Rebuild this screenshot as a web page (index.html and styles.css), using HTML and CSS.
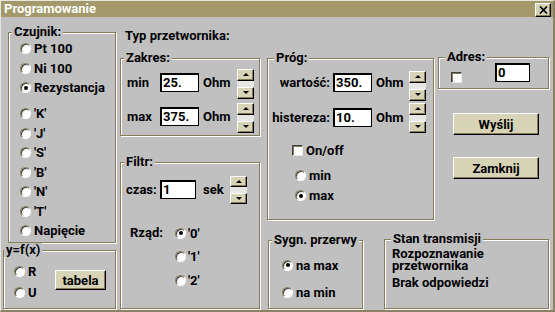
FILE: index.html
```html
<!DOCTYPE html>
<html>
<head>
<meta charset="utf-8">
<link rel="stylesheet" href="styles.css">
</head>
<body>
<div class="window">
	<div class="titlebar">
		<span class="title">Programowanie</span>
		<span class="close"><svg width="9" height="8" viewBox="0 0 9 8"><path d="M1 0.5L8 7.5M8 0.5L1 7.5" stroke="#000" stroke-width="1.7"/></svg></span>
	</div>
	<div class="client">
		<div class="col-left">
			<div class="group czujnik">
				<span class="caption">Czujnik:</span>
				<div class="opts">
					<div class="opt"><span class="radio"></span>Pt 100</div>
					<div class="opt"><span class="radio"></span>Ni 100</div>
					<div class="opt"><span class="radio on"></span>Rezystancja</div>
				</div>
				<div class="opts tc">
					<div class="opt"><span class="radio"></span>'K'</div>
					<div class="opt"><span class="radio"></span>'J'</div>
					<div class="opt"><span class="radio"></span>'S'</div>
					<div class="opt"><span class="radio"></span>'B'</div>
					<div class="opt"><span class="radio"></span>'N'</div>
					<div class="opt"><span class="radio"></span>'T'</div>
					<div class="opt"><span class="radio"></span>Napięcie</div>
				</div>
			</div>
			<div class="group fx">
				<span class="caption">y=f(x)</span>
				<div class="opts">
					<div class="opt"><span class="radio"></span>R</div>
					<div class="opt"><span class="radio"></span>U</div>
				</div>
				<span class="btn tabela">tabela</span>
			</div>
		</div>

		<div class="col-mid">
			<div class="typ">Typ przetwornika:</div>
			<div class="group zakres">
				<span class="caption">Zakres:</span>
				<div class="row">
					<span class="lbl">min</span>
					<span class="edit">25.</span>
					<span class="unit">Ohm</span>
					<div class="spin"><span class="arrow up"></span><span class="track"></span><span class="arrow down"></span></div>
				</div>
				<div class="row">
					<span class="lbl">max</span>
					<span class="edit">375.</span>
					<span class="unit">Ohm</span>
					<div class="spin"><span class="arrow up"></span><span class="track"></span><span class="arrow down"></span></div>
				</div>
			</div>
			<div class="group filtr">
				<span class="caption">Filtr:</span>
				<div class="row">
					<span class="lbl">czas:</span>
					<span class="edit">1</span>
					<span class="unit">sek</span>
					<div class="spin small"><span class="arrow up"></span><span class="track"></span><span class="arrow down"></span></div>
				</div>
				<div class="rzad">
					<span class="lbl">Rząd:</span>
					<div class="opts">
						<div class="opt"><span class="radio on"></span>'0'</div>
						<div class="opt"><span class="radio"></span>'1'</div>
						<div class="opt"><span class="radio"></span>'2'</div>
					</div>
				</div>
			</div>
		</div>

		<div class="col-right">
			<div class="top-row">
				<div class="group prog">
					<span class="caption">Próg:</span>
					<div class="row first">
						<span class="lbl">wartość:</span>
						<span class="edit">350.</span>
						<span class="unit">Ohm</span>
						<div class="spin"><span class="arrow up"></span><span class="track"></span><span class="arrow down"></span></div>
					</div>
					<div class="row">
						<span class="lbl">histereza:</span>
						<span class="edit">10.</span>
						<span class="unit">Ohm</span>
						<div class="spin"><span class="arrow up"></span><span class="track"></span><span class="arrow down"></span></div>
					</div>
					<div class="opt check"><span class="checkbox"></span>On/off</div>
					<div class="opts">
						<div class="opt"><span class="radio"></span>min</div>
						<div class="opt"><span class="radio on"></span>max</div>
					</div>
				</div>
				<div class="side">
					<div class="group adres">
						<span class="caption">Adres:</span>
						<span class="checkbox"></span>
						<span class="edit">0</span>
					</div>
					<span class="btn big wyslij">Wyślij</span>
					<span class="btn big zamknij">Zamknij</span>
				</div>
			</div>
			<div class="bottom-row">
				<div class="group sygn">
					<span class="caption">Sygn. przerwy</span>
					<div class="opts">
						<div class="opt"><span class="radio on"></span>na max</div>
						<div class="opt"><span class="radio"></span>na min</div>
					</div>
				</div>
				<div class="group stan">
					<span class="caption">Stan transmisji</span>
					<div class="msg">Rozpoznawanie</div>
					<div class="msg">przetwornika</div>
					<div class="msg second">Brak odpowiedzi</div>
				</div>
			</div>
		</div>
	</div>
</div>
</body>
</html>
```

FILE: styles.css
```css
body {
	margin: 0;
	background: #c0c0c0;
	font: bold 13px Roboto, "Liberation Sans", sans-serif;
	color: #000;
}
.window {
	width: 555px;
	height: 312px;
	box-sizing: border-box;
	background: #c0c0c0;
	border-left: 1px solid #e6e6de;
	border-top: 1px solid #e6e6de;
	border-right: 2px solid #8a8262;
	border-bottom: 2px solid #8a8262;
	overflow: hidden;
}
.titlebar {
	height: 16px;
	background: #a3996b;
	display: flex;
	justify-content: space-between;
	align-items: flex-start;
	padding: 0 2px 0 3px;
}
.title {
	color: #fff;
	line-height: 16px;
}
.close {
	margin-top: 2px;
	width: 14px;
	height: 12px;
	background: #d6d3b6;
	border: 1px solid;
	border-color: #fff #000 #000 #fff;
	box-shadow: inset -1px -1px #857c5a;
	display: flex;
	align-items: center;
	justify-content: center;
}

.client {
	display: flex;
	padding-left: 2px;
}

/* group boxes */
.group {
	position: relative;
	box-sizing: border-box;
	border: 1px solid #857c5a;
	box-shadow: inset 1px 1px #fff, 1px 1px #fff;
}
.caption {
	position: absolute;
	top: -8px;
	left: 3px;
	padding: 0 2px;
	line-height: 14px;
	background: #c0c0c0;
	white-space: nowrap;
}

/* controls */
.opt {
	display: flex;
	align-items: center;
	height: 19.5px;
	white-space: nowrap;
}
.radio {
	width: 11px;
	height: 11px;
	box-sizing: border-box;
	border-radius: 50%;
	background: #fff;
	border: 1px solid;
	border-color: #857c5a #fff #fff #857c5a;
	box-shadow: inset 1px 1px #404040;
	margin-right: 3px;
	display: flex;
	align-items: center;
	justify-content: center;
	flex: none;
}
.radio.on::after {
	content: "";
	width: 4px;
	height: 4px;
	border-radius: 50%;
	background: #000;
}
.checkbox {
	width: 11px;
	height: 11px;
	box-sizing: border-box;
	background: #fff;
	border: 1px solid;
	border-color: #404040 #e8e8e8 #e8e8e8 #404040;
	box-shadow: inset 1px 1px #857c5a;
	margin-right: 3px;
	flex: none;
}
.edit {
	display: block;
	box-sizing: border-box;
	width: 39px;
	height: 19px;
	background: #fff;
	border: 1px solid #000;
	border-width: 2px 1px 1px 2px;
	padding: 1px 1px;
	line-height: 14px;
}
.btn {
	display: flex;
	align-items: center;
	justify-content: center;
	box-sizing: border-box;
	background: #d6d3b6;
	border: 1px solid;
	border-color: #fff #000 #000 #fff;
	box-shadow: inset -1px -1px #857c5a;
}
.spin {
	display: flex;
	flex-direction: column;
	width: 17px;
	height: 30px;
	flex: none;
}
.arrow {
	height: 12px;
	box-sizing: border-box;
	background: #d6d3b6;
	border: 1px solid;
	border-color: #fff #000 #000 #fff;
	box-shadow: inset -1px -1px #857c5a;
	display: flex;
	align-items: center;
	justify-content: center;
}
.arrow::after {
	content: "";
	border-left: 3px solid transparent;
	border-right: 3px solid transparent;
}
.arrow.up::after {
	border-bottom: 3px solid #000;
}
.arrow.down::after {
	border-top: 3px solid #000;
}
.track {
	height: 6px;
	background: #e6e6e2;
}
.spin.small {
	height: 28px;
}
.spin.small .arrow {
	height: 11px;
}
.row {
	display: flex;
	align-items: center;
	white-space: nowrap;
}

/* left column */
.col-left {
	width: 113px;
	display: flex;
	flex-direction: column;
}
.czujnik {
	margin: 15px 0 0 5px;
	width: 108px;
	height: 211px;
	padding: 6px 0 0 11px;
}
.czujnik .tc {
	margin-top: 6.5px;
}
.czujnik .opt {
	height: 19.5px;
}
.fx {
	margin-top: 7px;
	width: 113px;
	height: 59px;
	display: flex;
	align-items: flex-start;
	padding: 10px 0 0 10px;
}
.fx .caption {
	left: 0;
}
.fx .opts {
	width: 41px;
}
.fx .opt {
	height: 21px;
}
.tabela {
	margin-top: 9px;
	width: 51px;
	height: 20px;
}

/* middle column */
.col-mid {
	margin-left: 4px;
	width: 140px;
}
.typ {
	margin: 12px 0 0 5px;
	line-height: 14px;
}
.zakres {
	margin-top: 15px;
	height: 78px;
	padding-top: 7.5px;
}
.zakres .row + .row {
	margin-top: 2px;
}
.zakres .lbl {
	margin-left: 6px;
	width: 33px;
}
.zakres .unit {
	margin-left: 4px;
	width: 34px;
}
.zakres .spin {
	margin-top: 2px;
}
.filtr {
	margin-top: 26px;
	height: 147px;
	padding-top: 12px;
}
.filtr .row .lbl {
	margin-left: 5px;
	width: 34px;
}
.filtr .edit {
	width: 36px;
}
.filtr .unit {
	margin-left: 7px;
	width: 27px;
}
.filtr .spin {
	margin-top: 1px;
}
.rzad {
	display: flex;
	margin-top: 17.25px;
}
.rzad .lbl {
	margin-left: 9px;
	width: 45px;
	line-height: 23.5px;
}
.rzad .opt {
	height: 23.5px;
}
.rzad .radio {
	margin-right: 2px;
}

/* right column */
.col-right {
	margin-left: 7px;
	width: 282px;
}
.top-row {
	display: flex;
	align-items: flex-start;
	margin-top: 40px;
}
.prog {
	margin-top: 1px;
	width: 167px;
	height: 162px;
	padding-top: 5.7px;
}
.prog .caption {
	left: 6px;
}
.prog .lbl {
	width: 62px;
	margin-right: 3px;
	text-align: right;
}
.prog .unit {
	margin-left: 4px;
	width: 33px;
}
.prog .first .spin {
	margin-top: 6px;
}
.prog .row + .row {
	margin-top: 1px;
}
.prog .row + .row .spin {
	margin-top: 1px;
}
.prog .check {
	margin: 8.3px 0 0 24px;
	height: 20px;
}
.prog .opts {
	margin: 4px 0 0 27px;
}
.prog .opts .opt {
	height: 20.5px;
}
.side {
	margin-left: 4px;
	width: 111px;
	display: flex;
	flex-direction: column;
}
.adres {
	width: 111px;
	height: 32px;
	display: flex;
	align-items: flex-start;
}
.adres .caption {
	left: 6px;
}
.adres .checkbox {
	margin: 14px 0 0 12px;
}
.adres .edit {
	margin: 5px 0 0 33px;
	width: 35px;
}
.big {
	margin-left: 15px;
	width: 86px;
	height: 22px;
}
.wyslij {
	margin-top: 24px;
}
.zamknij {
	margin-top: 22px;
}
.bottom-row {
	display: flex;
	align-items: flex-start;
	margin-top: 19px;
}
.sygn {
	margin: 1px 0 0 1px;
	width: 95px;
	height: 69px;
	padding: 10.5px 0 0 13px;
}
.sygn .opt {
	height: 27px;
}
.stan {
	margin-left: 21px;
	width: 165px;
	height: 70px;
	padding: 6.5px 0 0 7px;
}
.stan .caption {
	left: 6px;
}
.msg {
	height: 12.5px;
	line-height: 13px;
}
.msg.second {
	margin-top: 4px;
}
```
